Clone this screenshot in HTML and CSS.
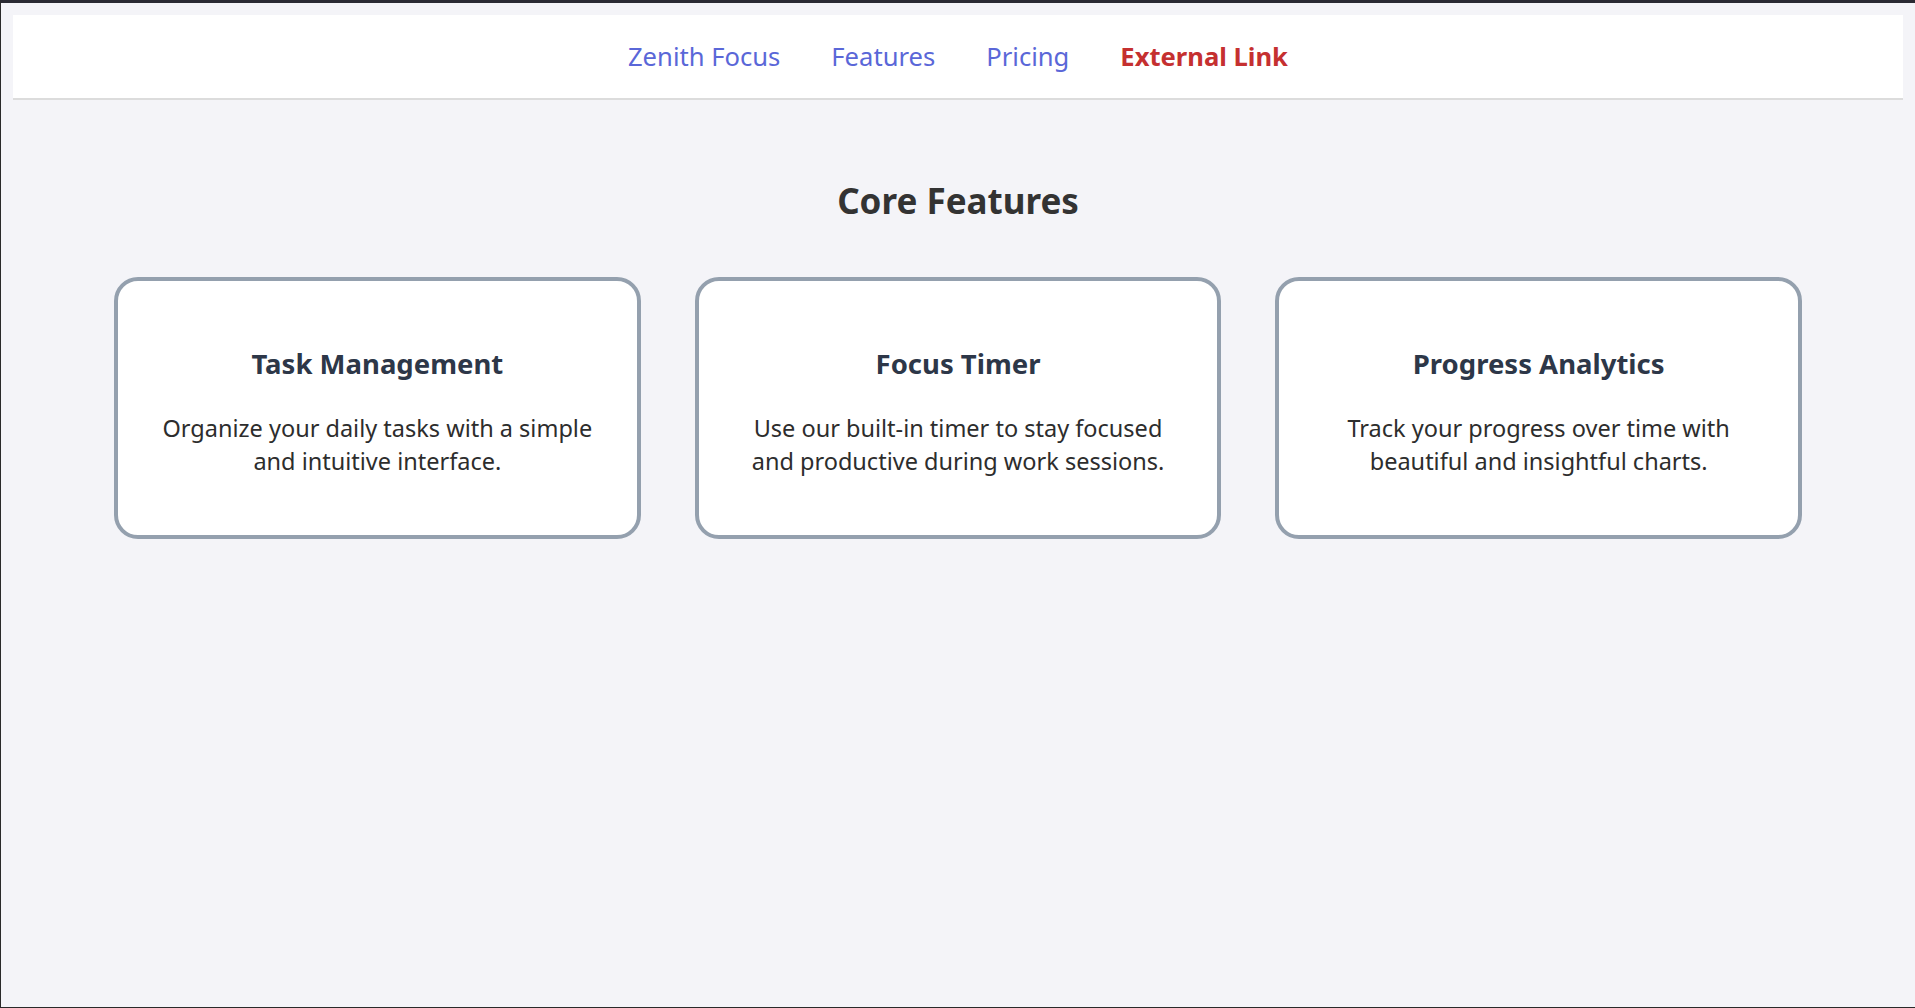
FILE: index.html
```html
<!DOCTYPE html>
<html lang="en">
<head>
<meta charset="utf-8">
<title>Zenith Focus</title>
<link rel="stylesheet" href="styles.css">
</head>
<body>
<div class="page">
  <nav class="topnav">
    <a class="nav-link" href="#">Zenith Focus</a>
    <a class="nav-link" href="#">Features</a>
    <a class="nav-link" href="#">Pricing</a>
    <a class="nav-link nav-external" href="#">External Link</a>
  </nav>
  <main class="features">
    <h1 class="features-title">Core Features</h1>
    <div class="card-grid">
      <div class="card">
        <h3 class="card-title">Task Management</h3>
        <p class="card-text">Organize your daily tasks with a simple and intuitive interface.</p>
      </div>
      <div class="card">
        <h3 class="card-title">Focus Timer</h3>
        <p class="card-text">Use our built-in timer to stay focused and productive during work sessions.</p>
      </div>
      <div class="card">
        <h3 class="card-title">Progress Analytics</h3>
        <p class="card-text">Track your progress over time with beautiful and insightful charts.</p>
      </div>
    </div>
  </main>
</div>
</body>
</html>
```

FILE: styles.css
```css
* { box-sizing: border-box; }
html { background: #2a2a30; }
body {
  margin: 0;
  height: 1008px;
  background: #f4f4f8;
  border-top: 3px solid #2a2a33;
  border-left: 1px solid #2a2a2a;
  border-bottom: 1px solid #2a2a2a;
  font-family: "Noto Sans", "Open Sans", sans-serif;
  overflow: hidden;
}
.page {
  padding: 12px;
}
.topnav {
  height: 85px;
  background: #ffffff;
  border-bottom: 2px solid #dcdcdc;
  display: flex;
  justify-content: center;
  align-items: center;
  gap: 51px;
}
.nav-link {
  font-size: 25.6px;
  color: #5a67d8;
  text-decoration: none;
}
.nav-external {
  color: #c53030;
  font-weight: 700;
}
.features-title {
  margin: 77px 0 0;
  text-align: center;
  font-size: 35px;
  font-weight: 700;
  color: #333333;
}
.card-grid {
  width: 1688px;
  margin: 53px auto 0;
  display: grid;
  grid-template-columns: repeat(3, 1fr);
  gap: 54px;
}
.card {
  height: 262px;
  background: #ffffff;
  border: 4px solid #94a0ae;
  border-radius: 24px;
  padding: 64px 44px 0;
  text-align: center;
}
.card-title {
  margin: 0;
  font-size: 27.5px;
  font-weight: 700;
  color: #2d3748;
}
.card-text {
  margin: 30px 0 0;
  font-size: 23.5px;
  line-height: 33px;
  color: #2d2d2d;
}
```
